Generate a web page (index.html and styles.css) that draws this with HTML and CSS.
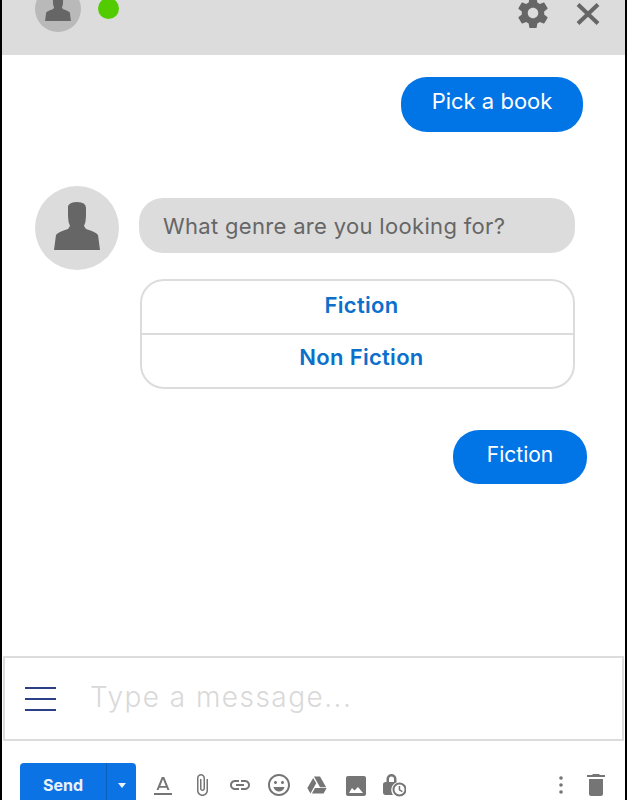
FILE: index.html
```html
<!DOCTYPE html>
<html lang="en">
<head>
<meta charset="utf-8">
<title>Chat</title>
<link rel="stylesheet" href="styles.css">
</head>
<body>
<div class="app">
  <header class="header">
    <div class="mini-avatar">
      <svg class="person" viewBox="0 0 46 48"><path d="M0 48 2 33Q4 30 14 27L16 24Q14 20 14 14L14 4Q16 0 23 0 32 0 32 6L32 14Q32 20 30 24L32 27Q42 30 44 33L46 48Z"/></svg>
    </div>
    <span class="status"></span>
    <div class="header-actions">
      <svg class="gear" viewBox="2 2 20 20"><path d="M19.43 12.98c.04-.32.07-.64.07-.98s-.03-.66-.07-.98l2.11-1.65c.19-.15.24-.42.12-.64l-2-3.46c-.12-.22-.39-.3-.61-.22l-2.49 1c-.52-.4-1.08-.73-1.69-.98l-.38-2.65C14.46 2.18 14.25 2 14 2h-4c-.25 0-.46.18-.49.42l-.38 2.65c-.61.25-1.17.59-1.69.98l-2.49-1c-.23-.09-.49 0-.61.22l-2 3.46c-.13.22-.07.49.12.64l2.11 1.65c-.04.32-.07.65-.07.98s.03.66.07.98l-2.11 1.65c-.19.15-.24.42-.12.64l2 3.46c.12.22.39.3.61.22l2.49-1c.52.4 1.08.73 1.69.98l.38 2.65c.03.24.24.42.49.42h4c.25 0 .46-.18.49-.42l.38-2.65c.61-.25 1.17-.59 1.69-.98l2.49 1c.23.09.49 0 .61-.22l2-3.46c.12-.22.07-.49-.12-.64l-2.11-1.65zM12 15.5c-1.93 0-3.5-1.57-3.5-3.5s1.57-3.5 3.5-3.5 3.5 1.57 3.5 3.5-1.57 3.5-3.5 3.5z"/></svg>
      <svg class="close" viewBox="0 0 24 22"><path d="M2 1.500 22 20.500M22 1.500 2 20.500"/></svg>
    </div>
  </header>

  <main class="messages">
    <div class="bubble user pick">Pick a book</div>
    <div class="bot-row">
      <div class="avatar">
        <svg class="person" viewBox="0 0 46 48"><path d="M0 48 2 33Q4 30 14 27L16 24Q14 20 14 14L14 4Q16 0 23 0 32 0 32 6L32 14Q32 20 30 24L32 27Q42 30 44 33L46 48Z"/></svg>
      </div>
      <div class="bot-col">
        <div class="bubble bot">What genre are you looking for?</div>
        <div class="options">
          <div class="option">Fiction</div>
          <div class="option">Non Fiction</div>
        </div>
      </div>
    </div>
    <div class="bubble user fiction">Fiction</div>
  </main>

  <div class="composer">
    <div class="burger"><span></span><span></span><span></span></div>
    <div class="placeholder">Type a message...</div>
  </div>

  <footer class="toolbar">
    <div class="send">
      <span class="send-label">Send</span>
      <span class="send-arrow"><span class="caret"></span></span>
    </div>
    <div class="tools">
      <svg class="tool" viewBox="0 0 24 24"><path d="M3 20v2h18v-2H3zm5.500-5.200h7l.9 2.200h2.100L13.250 4h-2.500L5.500 17h2.100l.9-2.200zM12 6.200 14.700 13H9.300L12 6.200z"/></svg>
      <svg class="tool" viewBox="0 0 24 24"><path d="M16.500 6v11.500c0 2.210-1.790 4-4 4s-4-1.790-4-4V5c0-1.380 1.120-2.500 2.500-2.500s2.500 1.120 2.500 2.500v10.500c0 .55-.45 1-1 1s-1-.45-1-1V6H10v9.500c0 1.380 1.120 2.500 2.500 2.500s2.500-1.120 2.500-2.500V5c0-2.210-1.790-4-4-4S7 2.790 7 5v12.500c0 3.040 2.460 5.500 5.500 5.500s5.500-2.460 5.500-5.500V6h-1.500z"/></svg>
      <svg class="tool" viewBox="0 0 24 24"><path d="M3.900 12c0-1.710 1.390-3.100 3.100-3.100h4V7H7c-2.760 0-5 2.240-5 5s2.240 5 5 5h4v-1.900H7c-1.710 0-3.100-1.390-3.100-3.100zM8 13h8v-2H8v2zm9-6h-4v1.900h4c1.710 0 3.100 1.390 3.100 3.100s-1.390 3.100-3.100 3.100h-4V17h4c2.760 0 5-2.240 5-5s-2.240-5-5-5z"/></svg>
      <svg class="tool" viewBox="0 0 24 24"><path d="M11.990 1C5.920 1 1 5.930 1 12s4.920 11 10.990 11C18.070 23 23 18.070 23 12S18.070 1 11.990 1zM12 21c-4.970 0-9-4.030-9-9s4.030-9 9-9 9 4.030 9 9-4.030 9-9 9zm3.500-10c.83 0 1.500-.67 1.500-1.500S16.330 8 15.500 8 14 8.670 14 9.500s.67 1.500 1.500 1.500zm-7 0c.83 0 1.500-.67 1.500-1.500S9.330 8 8.500 8 7 8.670 7 9.500 7.670 11 8.500 11zm3.500 7.500c2.600 0 4.800-1.700 5.600-4.500H6.400c.8 2.800 3 4.500 5.600 4.500z"/></svg>
      <svg class="tool" viewBox="-1.500 -2 27 27"><path d="M7.710 3.500 1.150 15l3.430 6 6.550-11.500L7.710 3.500zM9.730 15 6.300 21h13.120l3.430-6H9.730zM22.280 14 15.420 2H8.580v.01L15.430 14h6.850z"/></svg>
      <svg class="tool" viewBox="0 0 24 24"><path d="M22 21V5c0-1.100-.9-2-2-2H4c-1.100 0-2 .9-2 2v16c0 1.100.9 2 2 2h16c1.100 0 2-.9 2-2zM8 15l2.500 2.500L14 14l5 6H5l3-5z"/></svg>
      <svg class="tool" viewBox="0 0 24 24"><path d="M14.500 9.500V6A5 5 0 0 0 4.500 6v3H3.500C2.100 9 1 10.100 1 11.500v8C1 20.900 2.100 22 3.500 22H11a8 8 0 0 1 3.500-12.500zM7 9V6a2.500 2.500 0 0 1 5 0v3H7z"/><path d="M17.500 9.500a7 7 0 1 0 0 14 7 7 0 0 0 0-14zm0 12a5 5 0 1 1 0-10 5 5 0 0 1 0 10zM18.200 13h-1.500v4.200l3.300 2 .8-1.200-2.600-1.500V13z"/></svg>
    </div>
    <div class="tools-right">
      <svg class="tool" viewBox="0 0 24 24"><circle cx="12" cy="5" r="1.800"/><circle cx="12" cy="12" r="1.800"/><circle cx="12" cy="19" r="1.800"/></svg>
      <svg class="tool" viewBox="0 0 24 24"><path d="M5 21c0 1.100.9 2 2 2h10c1.100 0 2-.9 2-2V6H5v15zM21 2h-5l-1-1H9L8 2H3v2h18V2z"/></svg>
    </div>
  </footer>
</div>
</body>
</html>
```

FILE: styles.css
```css
* { box-sizing: border-box; }
html, body { margin: 0; padding: 0; background: #fff; }
body { font-family: Inter, "Open Sans", sans-serif; }

.app {
  width: 627px;
  height: 800px;
  overflow: hidden;
  display: flex;
  flex-direction: column;
  border-left: 2px solid #000;
  border-right: 2px solid #000;
}

.header {
  flex: none;
  height: 55px;
  background: #dcdcdc;
  display: flex;
  align-items: flex-start;
  padding-left: 33px;
}
.mini-avatar {
  width: 46px;
  height: 46px;
  margin-top: -14px;
  padding-bottom: 11px;
  border-radius: 50%;
  background: #b9b9b9;
  display: flex;
  align-items: flex-end;
  justify-content: center;
  overflow: hidden;
}
.mini-avatar .person { width: 26px; height: 27px; }
.person { fill: #666; display: block; }
.status {
  width: 21px;
  height: 21px;
  margin: -2px 0 0 17px;
  border-radius: 50%;
  background: #52cc00;
}
.header-actions {
  margin-left: auto;
  padding-right: 25px;
  display: flex;
  align-items: flex-start;
  gap: 28px;
}
.gear { width: 30px; height: 30px; margin-top: -2px; fill: #666; }
.close { width: 24px; height: 22px; margin-top: 3px; stroke: #666; stroke-width: 4; fill: none; }

.messages {
  flex: none;
  height: 601px;
  display: flex;
  flex-direction: column;
  align-items: flex-end;
}
.bubble {
  height: 55px;
  display: flex;
  align-items: center;
  font-size: 22px;
}
.user { background: #0275e6; color: #fff; justify-content: center; border-radius: 26px; }
.pick { width: 182px; margin: 22px 42px 0 0; padding-bottom: 7px; }
.fiction { width: 134px; height: 54px; margin: 41px 38px 0 0; padding-bottom: 6px; font-size: 21px; }

.bot-row {
  align-self: stretch;
  margin-top: 54px;
  padding-left: 33px;
  display: flex;
  gap: 20px;
}
.avatar {
  width: 84px;
  height: 84px;
  border-radius: 50%;
  background: #dcdcdc;
  display: flex;
  align-items: flex-end;
  justify-content: center;
  padding-bottom: 20px;
}
.avatar .person { width: 46px; height: 48px; }
.bot-col { width: 436px; padding-top: 12px; }
.bot { background: #dcdcdc; color: #666; border-radius: 24px; padding: 0 0 0 24px; letter-spacing: .32px; }
.options {
  margin: 26px 0 0 1px;
  height: 110px;
  border: 2px solid #dcdcdc;
  border-radius: 24px;
  display: flex;
  flex-direction: column;
}
.option {
  height: 52px;
  display: flex;
  align-items: center;
  justify-content: center;
  padding: 0 0 4px 8px;
  color: #0b6fcb;
  font-size: 22px;
  font-weight: 600;
  letter-spacing: .3px;
}
.option + .option { height: 54px; border-top: 2px solid #dcdcdc; padding-bottom: 8px; }

.composer {
  flex: none;
  height: 85px;
  margin: 0 1px;
  border: 2px solid #dcdcdc;
  display: flex;
  align-items: center;
  padding: 0 0 4px 20px;
}
.burger { width: 31px; margin-top: 4px; display: flex; flex-direction: column; gap: 9px; }
.burger span { height: 2px; background: #2a3f85; }
.placeholder { margin-left: 34px; font-size: 28px; font-weight: 300; letter-spacing: 1.45px; color: #d9d9d9; }

.toolbar {
  flex: none;
  height: 44px;
  margin-top: 22px;
  padding-left: 18px;
  display: flex;
  align-items: center;
}
.send {
  width: 116px;
  height: 44px;
  border-radius: 4px;
  background: #0b73e3;
  display: flex;
  color: #e9f2fd;
  font-weight: 700;
  font-size: 16px;
}
.send-label { width: 86px; display: flex; align-items: center; justify-content: center; }
.send-arrow { flex: 1; border-left: 1px solid #0a5fbd; display: flex; align-items: center; justify-content: center; }
.caret { width: 0; height: 0; border: 4px solid transparent; border-top: 5px solid #e9f2fd; border-bottom: 0; }
.tools { margin-left: 15px; display: flex; gap: 14.5px; }
.tool { width: 24px; height: 24px; fill: #757575; display: block; }
.tools-right { margin-left: auto; padding-right: 17px; display: flex; gap: 11px; }
```
